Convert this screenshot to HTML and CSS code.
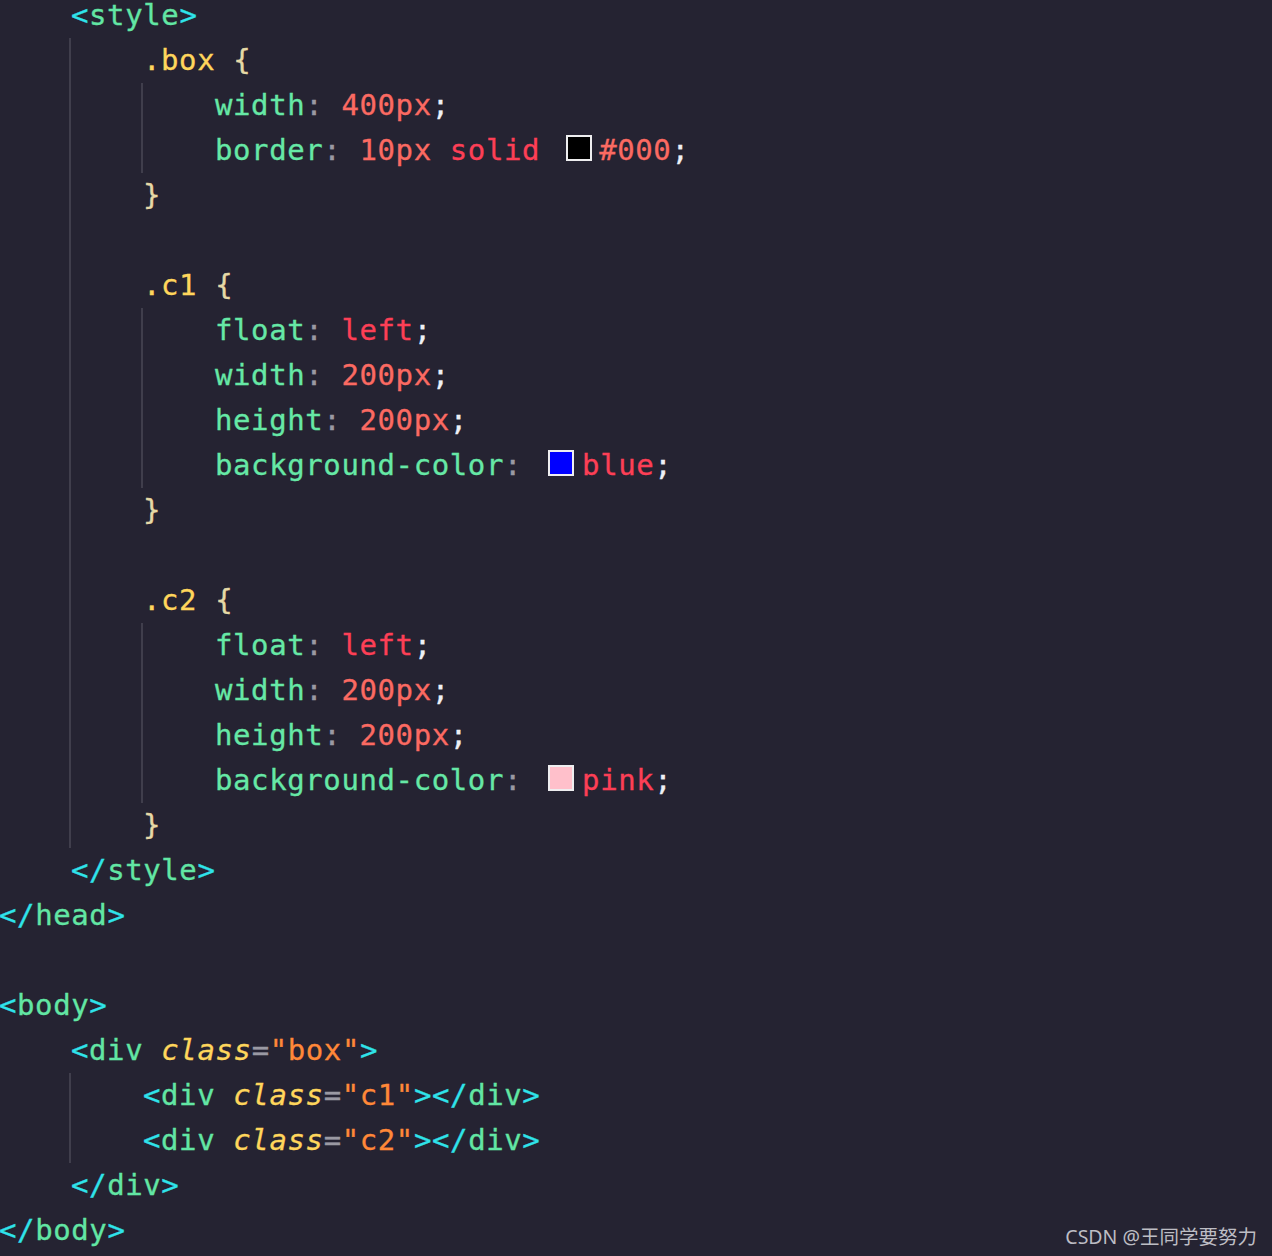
FILE: index.html
```html
<!DOCTYPE html>
<html lang="en">
<head>
<meta charset="utf-8">
<title>code</title>
<link rel="stylesheet" href="styles.css">
</head>
<body>
<div class="code">
  <div class="line in"><span class="p">&lt;</span><span class="t">style</span><span class="p">&gt;</span></div>
  <div class="guide">
    <div class="line in"><span class="s">.box</span> <span class="b">{</span></div>
    <div class="guide">
      <div class="line in"><span class="k">width</span><span class="c">:</span> <span class="n">400px</span><span class="sc">;</span></div>
      <div class="line in"><span class="k">border</span><span class="c">:</span> <span class="n">10px</span> <span class="v">solid</span> <span class="sw sw-black"></span><span class="n">#000</span><span class="sc">;</span></div>
    </div>
    <div class="line in"><span class="b">}</span></div>
    <div class="line"></div>
    <div class="line in"><span class="s">.c1</span> <span class="b">{</span></div>
    <div class="guide">
      <div class="line in"><span class="k">float</span><span class="c">:</span> <span class="v">left</span><span class="sc">;</span></div>
      <div class="line in"><span class="k">width</span><span class="c">:</span> <span class="n">200px</span><span class="sc">;</span></div>
      <div class="line in"><span class="k">height</span><span class="c">:</span> <span class="n">200px</span><span class="sc">;</span></div>
      <div class="line in"><span class="k">background-color</span><span class="c">:</span> <span class="sw sw-blue"></span><span class="v">blue</span><span class="sc">;</span></div>
    </div>
    <div class="line in"><span class="b">}</span></div>
    <div class="line"></div>
    <div class="line in"><span class="s">.c2</span> <span class="b">{</span></div>
    <div class="guide">
      <div class="line in"><span class="k">float</span><span class="c">:</span> <span class="v">left</span><span class="sc">;</span></div>
      <div class="line in"><span class="k">width</span><span class="c">:</span> <span class="n">200px</span><span class="sc">;</span></div>
      <div class="line in"><span class="k">height</span><span class="c">:</span> <span class="n">200px</span><span class="sc">;</span></div>
      <div class="line in"><span class="k">background-color</span><span class="c">:</span> <span class="sw sw-pink"></span><span class="v">pink</span><span class="sc">;</span></div>
    </div>
    <div class="line in"><span class="b">}</span></div>
  </div>
  <div class="line in"><span class="p">&lt;/</span><span class="t">style</span><span class="p">&gt;</span></div>
  <div class="line"><span class="p">&lt;/</span><span class="t">head</span><span class="p">&gt;</span></div>
  <div class="line"></div>
  <div class="line"><span class="p">&lt;</span><span class="t">body</span><span class="p">&gt;</span></div>
  <div class="line in"><span class="p">&lt;</span><span class="t">div</span> <span class="a">class</span><span class="e">=</span><span class="q">"box"</span><span class="p">&gt;</span></div>
  <div class="guide">
    <div class="line in"><span class="p">&lt;</span><span class="t">div</span> <span class="a">class</span><span class="e">=</span><span class="q">"c1"</span><span class="p">&gt;&lt;/</span><span class="t">div</span><span class="p">&gt;</span></div>
    <div class="line in"><span class="p">&lt;</span><span class="t">div</span> <span class="a">class</span><span class="e">=</span><span class="q">"c2"</span><span class="p">&gt;&lt;/</span><span class="t">div</span><span class="p">&gt;</span></div>
  </div>
  <div class="line in"><span class="p">&lt;/</span><span class="t">div</span><span class="p">&gt;</span></div>
  <div class="line"><span class="p">&lt;/</span><span class="t">body</span><span class="p">&gt;</span></div>
</div>
<div class="watermark">CSDN @王同学要努力</div>
</body>
</html>
```

FILE: styles.css
```css
html, body {
  margin: 0;
  padding: 0;
  background: #252332;
  height: 1256px;
  overflow: hidden;
}

body {
  position: relative;
}

.code {
  margin-top: -7px;
  margin-left: -1px;
  font-family: "DejaVu Sans Mono", "Liberation Mono", monospace;
  font-size: 29px;
  letter-spacing: 0.6px;
  color: #e8e8f0;
  -webkit-text-stroke: 0.3px currentColor;
}

.line {
  height: 45px;
  line-height: 45px;
  white-space: pre;
}

.line.in {
  padding-left: 72px;
}

.guide {
  margin-left: 70px;
  border-left: 2px solid #403e4c;
}

.p { color: #2fe3ea; }
.t { color: #62e6a4; }
.s { color: #ffd65c; }
.b { color: #e6d9a6; }
.k { color: #66e8a6; }
.c { color: #9a99a3; }
.n { color: #fb6a62; }
.v { color: #fd3f56; }
.sc { color: #eef0f6; }
.a { color: #ffd65c; font-style: italic; }
.e { color: #9a99a3; }
.q { color: #ff8838; }

.sw {
  display: inline-block;
  box-sizing: border-box;
  width: 26px;
  height: 26px;
  margin: 0 8px 0 8px;
  border: 2px solid #eeeef0;
  vertical-align: -1px;
  -webkit-text-stroke: 0;
}

.sw-black { background: #000; margin-left: 8px; margin-right: 7px; }
.sw-blue { background: #0000ff; }
.sw-pink { background: #ffc0cb; }

.watermark {
  position: absolute;
  right: 15px;
  bottom: 8px;
  font-family: "Noto Sans", "Noto Sans CJK SC", sans-serif;
  font-size: 19.5px;
  line-height: 22px;
  color: #bdbdc4;
}
```
